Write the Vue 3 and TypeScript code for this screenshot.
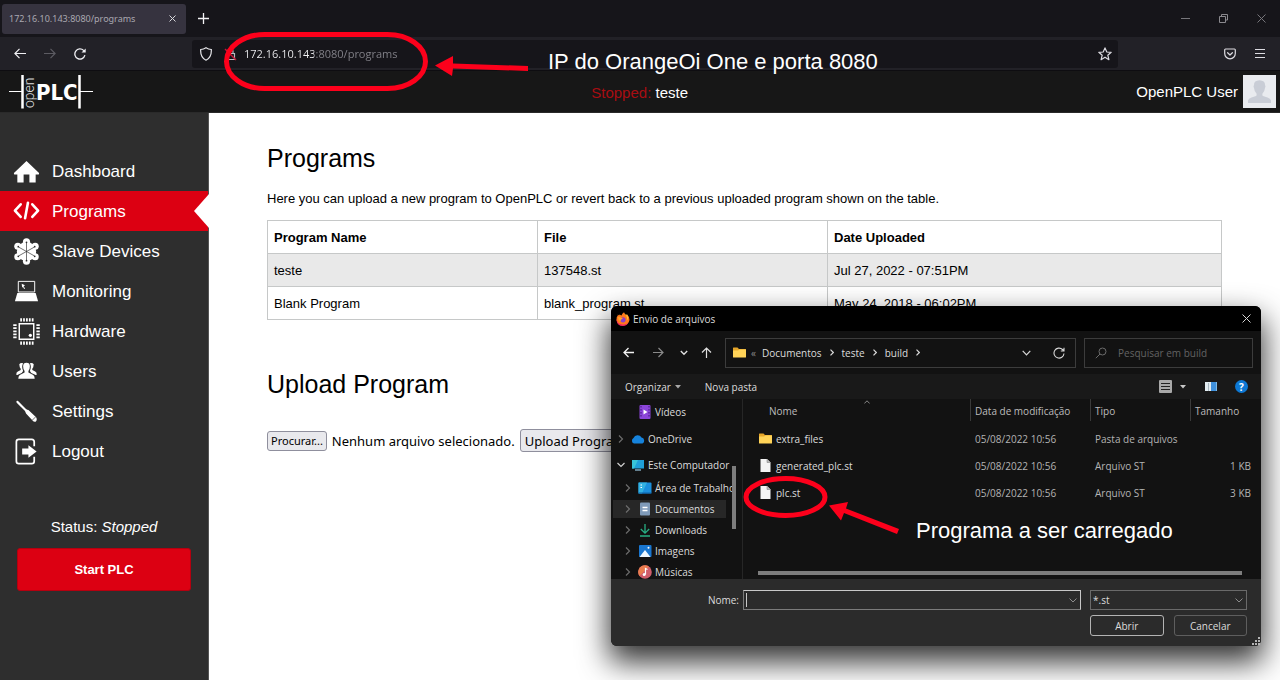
<script setup lang="ts">
import { ref } from 'vue'

interface Program { name: string; file: string; date: string }
interface TreeItem { label: string; icon: string; level: number; arrow: '' | 'right' | 'down'; size: string; selected?: boolean }
interface FileRow { name: string; folder: boolean; date: string; type: string; size: string }

const navItems: string[] = ['Dashboard', 'Programs', 'Slave Devices', 'Monitoring', 'Hardware', 'Users', 'Settings', 'Logout']
const active = ref('Programs')

const programs: Program[] = [
  { name: 'teste', file: '137548.st', date: 'Jul 27, 2022 - 07:51PM' },
  { name: 'Blank Program', file: 'blank_program.st', date: 'May 24, 2018 - 06:02PM' },
]

const tree: TreeItem[] = [
  { label: 'Vídeos', icon: 'video', level: 2, arrow: '', size: 'tall' },
  { label: 'OneDrive', icon: 'cloud', level: 1, arrow: 'right', size: 'taller' },
  { label: 'Este Computador', icon: 'pc', level: 1, arrow: 'down', size: 'mid' },
  { label: 'Área de Trabalho', icon: 'desktop', level: 2, arrow: 'right', size: '' },
  { label: 'Documentos', icon: 'docs', level: 2, arrow: 'right', size: '', selected: true },
  { label: 'Downloads', icon: 'down', level: 2, arrow: 'right', size: '' },
  { label: 'Imagens', icon: 'image', level: 2, arrow: 'right', size: '' },
  { label: 'Músicas', icon: 'music', level: 2, arrow: 'right', size: '' },
]

const files: FileRow[] = [
  { name: 'extra_files', folder: true, date: '05/08/2022 10:56', type: 'Pasta de arquivos', size: '' },
  { name: 'generated_plc.st', folder: false, date: '05/08/2022 10:56', type: 'Arquivo ST', size: '1 KB' },
  { name: 'plc.st', folder: false, date: '05/08/2022 10:56', type: 'Arquivo ST', size: '3 KB' },
]

const crumbs: string[] = ['Documentos', 'teste', 'build']
const url = ref('172.16.10.143:8080/programs')
const fileInput = ref<HTMLInputElement | null>(null)
const fileName = ref('')
const search = ref('')
</script>

<template>
  <div class="screen">
    <div class="tabbar">
      <div class="tab">
        <span>172.16.10.143:8080/programs</span>
        <button class="plain" aria-label="Close tab">
          <svg width="7" height="7" viewBox="0 0 7 7"><path d="M.5 .5 6.500 6.500M6.500 .5 .5 6.500" stroke="#d8d8dc" /></svg>
        </button>
      </div>
      <button class="plain new-tab" aria-label="New tab">
        <svg width="11" height="11" viewBox="0 0 11 11"><path d="M5.500 0V11M0 5.500H11" stroke="#f4f4f6" stroke-width="1.300" /></svg>
      </button>
      <div class="win-controls">
        <button class="plain" aria-label="Minimize"><svg width="9" height="9" viewBox="0 0 9 9"><path d="M0 4.500H9" stroke="#77767b" /></svg></button>
        <button class="plain" aria-label="Restore"><svg width="9" height="9" viewBox="0 0 9 9" fill="none" stroke="#8a898e"><path d="M.5 2.500H6.500V8.500H.5ZM2.500 2.500V.5H8.500V6H6.500" /></svg></button>
        <button class="plain" aria-label="Close"><svg width="9" height="9" viewBox="0 0 9 9"><path d="M.5 .5 8.500 8.500M8.500 .5 .5 8.500" stroke="#77767b" /></svg></button>
      </div>
    </div>

    <div class="toolbar">
      <div class="history">
        <button class="plain" aria-label="Back"><svg width="12" height="11" viewBox="0 0 12 11" fill="none" stroke="#f0f0f4" stroke-width="1.200"><path d="M12 5.500H1M5.500 .8 .9 5.500 5.500 10.200" /></svg></button>
        <button class="plain" aria-label="Forward"><svg width="12" height="11" viewBox="0 0 12 11" fill="none" stroke="#5c5b62" stroke-width="1.200"><path d="M0 5.500H11M6.500 .8 11.100 5.500 6.500 10.200" /></svg></button>
        <button class="plain" aria-label="Reload"><svg width="12" height="12" viewBox="0 0 12 12" fill="none" stroke="#f0f0f4" stroke-width="1.300"><path d="M10.900 7.200A5.100 5.100 0 1 1 9.600 2.400L10.800 3.600" /><path d="M11.700 .4V4.600H7.500Z" fill="#f0f0f4" stroke="none" /></svg></button>
      </div>
      <div class="urlbar">
        <svg width="12" height="14" viewBox="0 0 12 14" fill="none" stroke="#e6e6ea" stroke-width="1.200"><path d="M6 .8C7.700 2 9.500 2.500 11.300 2.500 11.600 7 10 11.300 6 13.200 2 11.300 .4 7 .7 2.500 2.500 2.500 4.300 2 6 .8Z" /></svg>
        <svg class="lock" width="13" height="14" viewBox="0 0 13 14" fill="none"><path d="M2.500 6.500H10.500V12.500H2.500ZM4 6.500V4.500A2.500 2.500 0 0 1 9 4.500V6.500" stroke="#bbbac0" stroke-width="1.200" /><path d="M1 2 12 13" stroke="#c2183a" stroke-width="1.400" /></svg>
        <input v-model="url" class="url" type="text" aria-label="Address" />
        <button class="plain star" aria-label="Bookmark"><svg width="14" height="14" viewBox="0 0 14 14" fill="none" stroke="#dddce2" stroke-width="1.200" stroke-linejoin="round"><path d="M7 .9 8.800 5 13.200 5.300 9.800 8.200 10.900 12.700 7 10.200 3.100 12.700 4.200 8.200 .8 5.300 5.200 5Z" /></svg></button>
      </div>
      <div class="extras">
        <button class="plain" aria-label="Pocket"><svg width="12" height="12" viewBox="0 0 12 12" fill="none" stroke="#dddce2" stroke-width="1.200" stroke-linecap="round" stroke-linejoin="round"><path d="M1.500 1H10.500Q11.300 1 11.300 2V5.500A5.300 5.300 0 0 1 .7 5.500V2Q.7 1 1.500 1ZM3.600 4.700 6 7 8.400 4.700" /></svg></button>
        <button class="plain" aria-label="Menu"><svg width="10" height="9" viewBox="0 0 10 9" stroke="#dddce2"><path d="M0 .5H10M0 4.500H10M0 8.500H10" /></svg></button>
      </div>
    </div>

    <header class="top">
      <svg class="logo" width="84" height="36" viewBox="0 0 84 36">
        <path d="M0 17.500H13M71 17.500H84" stroke="#fff" />
        <path d="M13.500 1V34.500M70.500 1V34.500" stroke="#fff" stroke-width="2.500" />
        <text class="logo-open" transform="translate(25 34) rotate(-90)">open</text>
        <text class="logo-plc" x="27" y="26">PLC</text>
      </svg>
      <p class="running"><span>Stopped:</span> teste</p>
      <div class="user">
        <span>OpenPLC User</span>
        <svg width="33" height="33" viewBox="0 0 33 33"><rect width="33" height="33" fill="#e9ebef" /><path d="M5 28V25.500Q5.500 23.500 8.500 22.600L13 21Q14 20.500 13.600 18.800 11.300 16.500 11 13 10 11.500 11 10 10.800 5.500 16.500 5.200 22.200 5.500 22 10 23 11.500 22 13 21.700 16.500 19.400 18.800 19 20.500 20 21L24.500 22.600Q27.500 23.500 28 25.500V28Z" fill="#c9cdd6" /></svg>
      </div>
    </header>

    <div class="page">
      <aside class="side">
        <nav>
          <a v-for="item in navItems" :key="item" href="#" :class="['nav-link', { active: item === active }]" @click.prevent="active = item">
            <svg width="27" height="27" viewBox="0 0 28 28" fill="#fff">
              <path v-if="item === 'Dashboard'" d="M14 3 1 15.500Q.5 17.500 2.500 17H4.500V25.500H11V17H17V25.500H23.500V17H25.500Q27.500 17.500 27 15.500Z" />
              <g v-else-if="item === 'Programs'" fill="none" stroke="#fff" stroke-width="2.700" stroke-linecap="round" stroke-linejoin="round"><path d="M8 6.500 2 13 8 19.500M20 6.500 26 13 20 19.500M15.500 5 12.500 21" /></g>
              <g v-else-if="item === 'Slave Devices'">
                <circle cx="14" cy="14" r="10" />
                <circle cx="14" cy="4" r="3.700" /><circle cx="14" cy="24" r="3.700" /><circle cx="5" cy="8.500" r="3.700" /><circle cx="23" cy="8.500" r="3.700" /><circle cx="5" cy="19.500" r="3.700" /><circle cx="23" cy="19.500" r="3.700" />
                <path d="M14 5V23M6 9.500 22 18.500M22 9.500 6 18.500" stroke="#2e2e2e" stroke-width=".7" />
                <g fill="#2e2e2e"><circle cx="14" cy="4.500" r=".9" /><circle cx="14" cy="23.500" r=".9" /><circle cx="5.500" cy="9" r=".9" /><circle cx="22.500" cy="9" r=".9" /><circle cx="5.500" cy="19" r=".9" /><circle cx="22.500" cy="19" r=".9" /></g>
              </g>
              <g v-else-if="item === 'Monitoring'"><path d="M5.500 3.500H22.500V14.500H5.500Z" fill="none" stroke="#fff" /><path d="M4.500 15.500H23.500L26 24H2Z" /><path d="M9 6 12.500 7.500 11 8.500 12.500 11 11.500 11.500 10.300 9 9.500 10Z" /></g>
              <g v-else-if="item === 'Hardware'"><path d="M6.500 6H21.500V22H6.500Z" fill="none" stroke="#fff" stroke-width="1.500" /><circle cx="18" cy="18" r="1.700" /><path d="M7.500 2H21.500M7.500 26H21.500" stroke="#fff" stroke-width="3.500" stroke-dasharray="1.800 1.200" /><path d="M2 6.500V21.500M26 6.500V21.500" stroke="#fff" stroke-width="3.500" stroke-dasharray="1.800 1.400" /></g>
              <g v-else-if="item === 'Users'"><path d="M6.500 6.500Q8 4.500 10.500 5.500 8.500 9 10.500 13.500L9 15.500Q5.500 17 4.500 17.500H3.500Q3 15 5 14L8 12.500Q8.500 11 7 9.500Z" /><path d="M21.500 6.500Q20 4.500 17.500 5.500 19.500 9 17.500 13.500L19 15.500Q22.500 17 23.500 17.500H24.500Q25 15 23 14L20 12.500Q19.500 11 21 9.500Z" /><path d="M10.500 8.500Q10.500 5 14 5 17.500 5 17.500 8.500 17.500 12 16 13.500V15L21 17.500Q22.500 18.500 22.500 21.500H5.500Q5.500 18.500 7 17.500L12 15V13.500Q10.500 12 10.500 8.500Z" /></g>
              <g v-else-if="item === 'Settings'"><path d="M3.500 3 5 2.800 14.500 12.500 13 14 3.800 5Z" /><path d="M13.500 12 16 12.500 24 20Q25.500 23 23.500 24.500 21.500 25 20.500 23.500L13.500 16 12.500 13.500Z" /><path d="M20 23 23.500 19.500" stroke="#2e2e2e" stroke-width=".7" /></g>
              <g v-else><path d="M22 8.500V4Q22 1.500 19.500 1.500H6Q3.500 1.500 3.500 4V24Q3.500 26.500 6 26.500H19.500Q22 26.500 22 24V19.500" fill="none" stroke="#fff" stroke-width="1.800" /><path d="M9.500 11H16V7.500L24.500 14 16 20.500V17H9.500Z" /></g>
            </svg>
            <span>{{ item }}</span>
          </a>
        </nav>
        <p class="status">Status: <em>Stopped</em></p>
        <button class="start">Start PLC</button>
      </aside>

      <main class="main">
        <h1>Programs</h1>
        <p class="intro">Here you can upload a new program to OpenPLC or revert back to a previous uploaded program shown on the table.</p>
        <table class="programs">
          <thead><tr><th class="c-name">Program Name</th><th class="c-file">File</th><th>Date Uploaded</th></tr></thead>
          <tbody>
            <tr v-for="p in programs" :key="p.file"><td>{{ p.name }}</td><td>{{ p.file }}</td><td>{{ p.date }}</td></tr>
          </tbody>
        </table>
        <h2>Upload Program</h2>
        <form class="upload" @submit.prevent>
          <input ref="fileInput" type="file" hidden />
          <button class="browse" type="button" @click="fileInput?.click()">Procurar...</button>
          <span>Nenhum arquivo selecionado.</span>
          <button class="submit" type="submit">Upload Program</button>
        </form>
      </main>
    </div>

    <section class="dialog" role="dialog" aria-labelledby="dialog-title">
      <div class="d-title">
        <svg width="14" height="14" viewBox="0 0 14 14"><path d="M3.500 2.500Q4.500 3 5.500 3.500 6 1.500 8 .3 8.500 2.300 10.500 3.500L10.800 2Q13.800 5 13.500 8A6.600 6.300 0 0 1 .5 8Q.3 5 1.800 3.600V2.500L3 3.600Z" fill="#ff7a1c" /><path d="M.7 7Q1 12 7 12.500 11 12.500 12.500 10 11 14 7 14 1 14 .5 8Z" fill="#f02860" /><circle cx="7" cy="7.800" r="2.600" fill="#8a3fc8" /><path d="M8 .3Q8.500 2.300 10.500 4 11.500 6 10.800 8.500 13 6 10.800 2L10.500 3.500Q8.700 2.300 8 .3Z" fill="#ffd83a" /><path d="M2 5Q4 4.500 7 6.500 4.500 7 4.500 9 2 8 2 5Z" fill="#ffa42a" /></svg>
        <span id="dialog-title">Envio de arquivos</span>
        <button class="plain" aria-label="Fechar"><svg width="9" height="9" viewBox="0 0 9 9"><path d="M.5 .5 8.500 8.500M8.500 .5 .5 8.500" stroke="#d5d5d5" /></svg></button>
      </div>

      <div class="d-nav">
        <div class="d-arrows">
          <button class="plain" aria-label="Voltar"><svg width="11" height="11" viewBox="0 0 11 11" fill="none" stroke="#f2f2f2" stroke-width="1.300"><path d="M11 5.500H1M5.500 1 1 5.500 5.500 10" /></svg></button>
          <button class="plain" aria-label="Avançar"><svg width="11" height="11" viewBox="0 0 11 11" fill="none" stroke="#8a8a8a" stroke-width="1.200"><path d="M0 5.500H10M5.500 1 10 5.500 5.500 10" /></svg></button>
          <button class="plain" aria-label="Recentes"><svg width="8" height="11" viewBox="0 0 8 11" fill="none" stroke="#e0e0e0" stroke-width="1.400"><path d="M.8 4 4 7.200 7.200 4" /></svg></button>
          <button class="plain" aria-label="Acima"><svg width="11" height="11" viewBox="0 0 11 11" fill="none" stroke="#e0e0e0" stroke-width="1.200"><path d="M5.500 11V1M1 5.500 5.500 1 10 5.500" /></svg></button>
        </div>
        <div class="path">
          <svg width="13" height="11" viewBox="0 0 13 11"><path d="M0 1Q0 .5 .5 .5H4.500L6 2H12.500Q13 2 13 2.500V10H0Z" fill="#e5a62a" /><path d="M0 3.500H5L6.500 2.500H13V10Q13 10.500 12.500 10.500H.5Q0 10.500 0 10Z" fill="#ffd358" /></svg>
          <span class="dim">«</span>
          <template v-for="c in crumbs" :key="c">
            <a href="#" @click.prevent>{{ c }}</a>
            <svg width="4" height="7" viewBox="0 0 4 7" fill="none" stroke="#d8d8d8" stroke-width="1.200"><path d="M.5 .7 3.300 3.500 .5 6.300" /></svg>
          </template>
          <button class="plain drop" aria-label="Locais anteriores"><svg width="9" height="6" viewBox="0 0 9 6" fill="none" stroke="#d8d8d8" stroke-width="1.200"><path d="M.7 .8 4.500 4.800 8.300 .8" /></svg></button>
          <button class="plain" aria-label="Atualizar"><svg width="12" height="12" viewBox="0 0 12 12" fill="none" stroke="#d8d8d8" stroke-width="1.100"><path d="M11 6.500A5 5 0 1 1 9.500 2.500L11 4M11 .8V4H7.800" /></svg></button>
        </div>
        <label class="search">
          <svg width="12" height="12" viewBox="0 0 12 12" fill="none" stroke="#6b6b6b"><circle cx="7.500" cy="4.500" r="3.500" /><path d="M5 7 .8 11.200" /></svg>
          <input v-model="search" type="text" placeholder="Pesquisar em build" aria-label="Pesquisar em build" />
        </label>
      </div>

      <div class="d-tools">
        <button class="plain text">Organizar <svg width="6" height="4" viewBox="0 0 6 4"><path d="M0 0H6L3 3.500Z" fill="#a8a8a8" /></svg></button>
        <button class="plain text new-folder">Nova pasta</button>
        <button class="plain view" aria-label="Exibição"><svg width="13" height="13" viewBox="0 0 13 13"><rect width="13" height="13" rx="1" fill="#a9a9a9" /><path d="M2 3.500H11M2 6.500H11M2 9.500H11" stroke="#222" /></svg></button>
        <button class="plain" aria-label="Mais opções"><svg width="6" height="4" viewBox="0 0 6 4"><path d="M0 0H6L3 3.500Z" fill="#c8c8c8" /></svg></button>
        <button class="plain preview" aria-label="Painel de visualização"><svg width="12" height="9" viewBox="0 0 12 9"><rect width="12" height="9" fill="#e3edf2" /><rect x="6" width="6" height="9" fill="#3f90dc" /><path d="M3.500 1V9" stroke="#a7b6c0" /><path d="M11.500 0V9" stroke="#7db9e8" /></svg></button>
        <button class="plain help" aria-label="Ajuda">?</button>
      </div>

      <div class="d-body">
        <div class="tree">
          <ul>
            <li v-for="t in tree" :key="t.label" :class="[t.size, { nested: t.level === 2, selected: t.selected }]">
              <svg class="chev" width="8" height="8" viewBox="0 0 8 8" fill="none" stroke-width="1.200"><path v-if="t.arrow === 'right'" d="M2 .5 5.500 4 2 7.500" stroke="#6d6d6d" /><path v-else-if="t.arrow === 'down'" d="M.5 2 4 5.500 7.500 2" stroke="#d0d0d0" /></svg>
              <svg width="14" height="14" viewBox="0 0 14 14">
                <g v-if="t.icon === 'video'"><rect x="1.500" y="0" width="11" height="14" rx="1" fill="#8b45d9" /><path d="M3 1V13M11 1V13" stroke="#3f167c" stroke-dasharray="1.500 1.500" /><path d="M5.500 4.500V9.500L9.500 7Z" fill="#fff" /></g>
                <path v-else-if="t.icon === 'cloud'" d="M3 11.500A3 3 0 0 1 2.500 6 4.500 4.500 0 0 1 10.500 5.500 3.200 3.200 0 0 1 11.500 11.500Z" fill="#1683dc" />
                <g v-else-if="t.icon === 'pc'"><rect x="1" y="2" width="12" height="8.500" fill="#1f9fd8" /><path d="M1 2H7L3 10.500H1Z" fill="#38c4d8" /><path d="M4 12H10" stroke="#7fa4b8" stroke-width="1.500" /></g>
                <g v-else-if="t.icon === 'desktop'"><rect x=".5" y="1.500" width="13" height="11" rx="1" fill="#1b8fdc" /><path d="M.5 1.500H9L4 12.500H.5Z" fill="#32b2e2" /><path d="M2.500 4H4M2.500 6.500H4" stroke="#fff" /><path d="M.5 12H13.500" stroke="#0d5fa5" /></g>
                <g v-else-if="t.icon === 'docs'"><rect x="2" y=".5" width="10" height="13" rx="1" fill="#7f9ab8" /><path d="M4.500 5.500H9.500M4.500 8.500H9.500" stroke="#fff" stroke-width="1.500" /></g>
                <path v-else-if="t.icon === 'down'" d="M7 1V10M2.800 6 7 10.200 11.200 6M2 13H12" fill="none" stroke="#27ae83" stroke-width="1.300" />
                <g v-else-if="t.icon === 'image'"><rect x="1" y="1" width="12.500" height="12" rx="1" fill="#1976cf" /><path d="M1.500 13 7 6 12.500 13Z" fill="#eef8ff" /><circle cx="10.500" cy="3.800" r="1" fill="#fff" /></g>
                <g v-else><circle cx="7" cy="7" r="6.800" fill="#cf5d6b" /><path d="M7 .2A6.800 6.800 0 0 0 1.500 11L11 1.500Q9 .2 7 .2Z" fill="#e97c4f" /><path d="M7.500 9.500V3.500L9.500 4.500" fill="none" stroke="#fff" stroke-width="1.200" /><circle cx="6.200" cy="9.600" r="1.500" fill="#fff" /></g>
              </svg>
              <span>{{ t.label }}</span>
            </li>
          </ul>
          <div class="vbar"></div>
        </div>
        <div class="files">
          <svg class="sort" width="6" height="4" viewBox="0 0 6 4" fill="none" stroke="#888"><path d="M.3 3.500 3 .8 5.700 3.500" /></svg>
          <table>
            <thead><tr><th>Nome</th><th class="f-date">Data de modificação</th><th class="f-type">Tipo</th><th class="f-size">Tamanho</th></tr></thead>
            <tbody>
              <tr v-for="f in files" :key="f.name">
                <td><div class="fname">
                  <svg v-if="f.folder" width="13" height="11" viewBox="0 0 13 11"><path d="M0 1Q0 .5 .5 .5H4.500L6 2H12.500Q13 2 13 2.500V10H0Z" fill="#e5a62a" /><path d="M0 3.500H5L6.500 2.500H13V10Q13 10.500 12.500 10.500H.5Q0 10.500 0 10Z" fill="#ffd358" /></svg>
                  <svg v-else width="13" height="13" viewBox="0 0 13 13"><path d="M1.500 0H8L11.500 3.500V13H1.500Z" fill="#f4f4f4" /><path d="M8 0V3.500H11.500" fill="#bcbcbc" stroke="#777" stroke-width=".5" /></svg>
                  <span>{{ f.name }}</span></div></td>
                <td>{{ f.date }}</td><td>{{ f.type }}</td><td class="num">{{ f.size }}</td>
              </tr>
            </tbody>
          </table>
          <div class="hbar"></div>
        </div>
      </div>

      <div class="d-foot">
        <label for="file-name">Nome:</label>
        <div class="combo name">
          <input id="file-name" v-model="fileName" type="text" />
          <i class="caret"></i>
          <svg width="8" height="5" viewBox="0 0 8 5" fill="none" stroke="#8d8d8d"><path d="M.5 .5 4 4 7.500 .5" /></svg>
        </div>
        <div class="combo">
          <select aria-label="Tipo de arquivo"><option>*.st</option></select>
          <svg width="8" height="5" viewBox="0 0 8 5" fill="none" stroke="#8d8d8d"><path d="M.5 .5 4 4 7.500 .5" /></svg>
        </div>
        <div class="actions">
          <button class="open">Abrir</button>
          <button>Cancelar</button>
        </div>
      </div>
      <svg class="grip" width="9" height="9" viewBox="0 0 9 9" fill="#b5b5b5"><path d="M6 0H8V2H6ZM3 3H5V5H3ZM6 3H8V5H6ZM0 6H2V8H0ZM3 6H5V8H3ZM6 6H8V8H6Z" /></svg>
    </section>

    <svg class="marks" width="1280" height="680" viewBox="0 0 1280 680" fill="none">
      <rect x="226.500" y="34.500" width="199" height="54" rx="38" ry="27" stroke="#fd001b" stroke-width="5" />
      <path d="M435 65.500 453 56V63.500L528 66V71L453 68.500 452 76Z" fill="#fd001b" />
      <ellipse cx="785.500" cy="497" rx="39.500" ry="18.500" stroke="#fd001b" stroke-width="5" />
      <path d="M829 505.500 848 502 846 508.500 899 529 897 534 844 513 841 520.500Z" fill="#fd001b" />
    </svg>
    <p class="note note-ip">IP do OrangeOi One e porta 8080</p>
    <p class="note note-file">Programa a ser carregado</p>
  </div>
</template>

<style>
body { margin: 0; }
</style>

<style scoped>
* { box-sizing: border-box; }
.screen {
  position: relative;
  display: flex;
  flex-direction: column;
  min-height: 100vh;
  overflow: hidden;
  background: #fff;
  font-family: "Liberation Sans", Arial, sans-serif;
}
p, h1, h2, ul { margin: 0; padding: 0; font-weight: normal; }
svg { flex: none; display: block; }
button, input, select { font: inherit; color: inherit; }
a { color: inherit; text-decoration: none; }
.plain { display: flex; align-items: center; padding: 0; border: 0; background: none; cursor: pointer; }

.tabbar { display: flex; align-items: center; height: 37px; background: #16151a; font-family: "Noto Sans", "Open Sans", sans-serif; }
.tab { display: flex; align-items: center; justify-content: space-between; width: 184px; height: 30px; margin-left: 2px; padding: 0 10px 0 7px; border-radius: 3px; background: #36333f; color: #a9a8b0; font-size: 9px; }
.new-tab { margin-left: 12px; }
.win-controls { display: flex; gap: 29px; margin-left: auto; padding-right: 14px; }

.toolbar { display: flex; align-items: center; height: 34px; border-bottom: 1px solid #0e0d11; background: #222127; font-family: "Open Sans", "Noto Sans", sans-serif; }
.history { display: flex; align-items: center; gap: 18px; width: 192px; padding-left: 14px; }
.urlbar { display: flex; align-items: center; flex: 1; height: 28px; padding: 0 6px 0 8px; border-radius: 3px; background: #16151a; }
.lock { margin-left: 12px; }
.url {
  flex: 1;
  min-width: 0;
  margin-left: 7px;
  padding: 0;
  border: 0;
  outline: 0;
  background: linear-gradient(90deg, #f2f2f5 70px, #85848b 70px);
  background-clip: text;
  -webkit-background-clip: text;
  color: transparent;
  font-size: 11px;
}
.extras { display: flex; align-items: center; gap: 19px; padding: 0 15px 0 106px; }

.top { display: flex; align-items: center; justify-content: space-between; height: 42px; padding: 0 4px 0 9px; border-bottom: 1px solid #2a2a2a; background: #171717; color: #fff; font-size: 15px; }
.logo-open { fill: #ddd; font: 300 14px Roboto, sans-serif; }
.logo-plc { fill: #fff; font: bold 22px "Liberation Sans Narrow", "DejaVu Sans Condensed", "Noto Sans", sans-serif; }
.running { flex: 1; padding: 2px 0 0 50px; text-align: center; }
.user { display: flex; align-items: center; gap: 5px; }
.running span { color: #a80d12; }

.page { display: flex; flex: 1; }
.side { width: 209px; padding-top: 38px; background: #2e2e2e; border-right: 1px solid #555; color: #fff; }
.nav-link { position: relative; display: flex; align-items: center; gap: 12px; height: 40px; padding: 1px 0 0 13px; font-size: 17px; }
.active { background: #dc0012; }
.active::after { content: ""; position: absolute; right: -1px; top: 3px; border: solid transparent; border-width: 17px 15px 17px 0; border-right-color: #fff; }
.status { margin-top: 46px; text-align: center; font-size: 15px; line-height: 20px; }
.start { display: block; width: 174px; height: 43px; margin: 11px auto 0 17px; border: 1px solid #b5000f; border-radius: 3px; background: #dc0012; color: #fff; font-size: 13px; font-weight: bold; }

.main { flex: 1; padding: 30px 58px 0; color: #000; font-size: 13px; }
h1, h2 { font-size: 25px; line-height: 30px; }
.intro { margin-top: 16px; line-height: 20px; }
.programs { width: 100%; margin-top: 11px; border-collapse: collapse; table-layout: fixed; }
.programs th, .programs td { height: 33px; padding: 0 6px; border: 1px solid #c6c8c8; text-align: left; }
.programs tbody tr:first-child { background: #e9e9e9; }
.c-name { width: 270px; }
.c-file { width: 290px; }
h2 { margin-top: 49px; }
.upload { display: flex; align-items: center; gap: 5px; margin-top: 30px; font-family: "Noto Sans", "Open Sans", sans-serif; white-space: nowrap; }
.upload button { border: 1px solid #8f8f9d; border-radius: 3px; background: #e9e9ed; padding: 0 4px; }
.upload .browse { height: 20px; padding: 0 3px; font-size: 11px; line-height: 18px; }
.submit { height: 23px; line-height: 20px; }

.dialog {
  position: absolute;
  left: 611px;
  top: 306px;
  width: 650px;
  border-radius: 6px;
  background: #121212;
  box-shadow: 0 14px 30px 2px rgba(0, 0, 0, 0.8);
  color: #dcdcdc;
  font-family: "Open Sans", "Noto Sans", sans-serif;
  font-size: 10px;
}
.d-title { display: flex; align-items: center; gap: 3px; height: 25px; padding: 0 10px 0 5px; border-radius: 6px 6px 0 0; background: #000; }
.d-title button { margin-left: auto; }
.d-nav { display: flex; align-items: center; gap: 8px; height: 43px; padding: 0 8px 0 2px; }
.d-arrows { display: grid; grid-template-columns: 30px 30px 22px 22px; justify-items: center; }
.path, .search { display: flex; align-items: center; height: 30px; border: 1px solid #3c3c3c; }
.path { flex: 1; gap: 8px; padding: 0 10px 0 7px; }
.dim { margin: 0 -2px 0 -3px; color: #8a8a8a; }
.drop { margin-left: auto; margin-right: 14px; }
.search { width: 169px; padding: 0 10px; gap: 11px; }
.search input { flex: 1; min-width: 0; padding: 0; border: 0; outline: 0; background: none; }
.search input::placeholder { color: #636363; opacity: 1; }
.d-tools { display: flex; align-items: center; height: 25px; padding: 0 13px 0 14px; background: #191919; }
.text { gap: 4px; }
.new-folder { margin-left: 24px; }
.view { margin: 0 8px 0 auto; }
.preview { margin: 0 18px 0 19px; }
.help { justify-content: center; width: 13px; height: 13px; border-radius: 50%; background: #0d78d4; color: #fff; font-weight: bold; }

.d-body { display: flex; height: 180px; }
.tree { display: flex; justify-content: space-between; width: 132px; padding: 0 6px 0 2px; border-right: 1px solid #262626; overflow: hidden; }
ul { flex: none; width: 118px; list-style: none; }
li { display: flex; align-items: center; height: 21px; padding-left: 4px; white-space: nowrap; }
li > svg + svg { margin: 0 3px 0 6px; }
li.nested { padding-left: 11px; }
li.tall { height: 26px; }
li.taller { height: 28px; }
li.mid { height: 24px; }
li.selected { background: linear-gradient(#272727, #272727) 0 0 / 113px 18px no-repeat; background-position-y: center; }
.vbar { width: 4px; height: 63px; margin-top: 67px; background: #7d7d7d; }
.files { position: relative; flex: 1; min-width: 0; display: flex; flex-direction: column; }
.sort { position: absolute; left: 121px; top: 1px; }
.files table { width: 100%; border-collapse: collapse; table-layout: fixed; }
.files th { height: 26px; padding: 0 0 2px 5px; text-align: left; font-weight: normal; color: #bdbdbd; background: linear-gradient(#3a3a3a, #3a3a3a) 0 0 / 1px 22px no-repeat; }
.files th:first-child { padding-left: 26px; background: none; }
.files td { height: 27px; padding: 0 0 0 5px; color: #b4b4b4; }
.files td:first-child { padding-left: 16px; color: #dcdcdc; }
.files .num { padding-right: 10px; text-align: right; }
.f-date { width: 120px; }
.f-type { width: 100px; }
.f-size { width: 71px; }
.fname { display: flex; align-items: center; gap: 4px; }
.hbar { height: 4px; margin: auto 19px 4px 15px; background: #7d7d7d; }

.d-foot { display: grid; grid-template-columns: 128px 1fr 157px; gap: 5px 0; align-items: center; align-content: start; height: 67px; padding: 11px 14px 0 0; border-radius: 0 0 6px 6px; background: #2b2b2b; }
.d-foot label { text-align: right; }
.combo { position: relative; height: 20px; border: 1px solid #6a6a6a; }
.combo.name { margin: 0 9px 0 4px; border-color: #c8c8c8 #c8c8c8 #7b7b7b #7b7b7b; }
.combo input, .combo select { display: block; width: 100%; height: 100%; padding: 0 2px; border: 0; outline: 0; appearance: none; background: none; }
.combo svg { position: absolute; right: 3px; top: 7px; pointer-events: none; }
.caret { position: absolute; left: 2px; top: 2px; width: 1px; height: 14px; background: #c8c8c8; }
.actions { grid-column: 3; display: flex; gap: 10px; }
.actions button { flex: 1; height: 21px; padding: 0; border: 1px solid #5e5e5e; border-radius: 3px; background: #2b2b2b; }
.actions .open { border-color: #b4b4b4; }
.grip { position: absolute; right: 0; bottom: 0; }

.marks { position: absolute; left: 0; top: 0; pointer-events: none; }
.note { position: absolute; color: #fff; font-size: 22px; line-height: 26px; white-space: nowrap; }
.note-ip { left: 548px; top: 49px; }
.note-file { left: 916px; top: 518px; }
</style>
